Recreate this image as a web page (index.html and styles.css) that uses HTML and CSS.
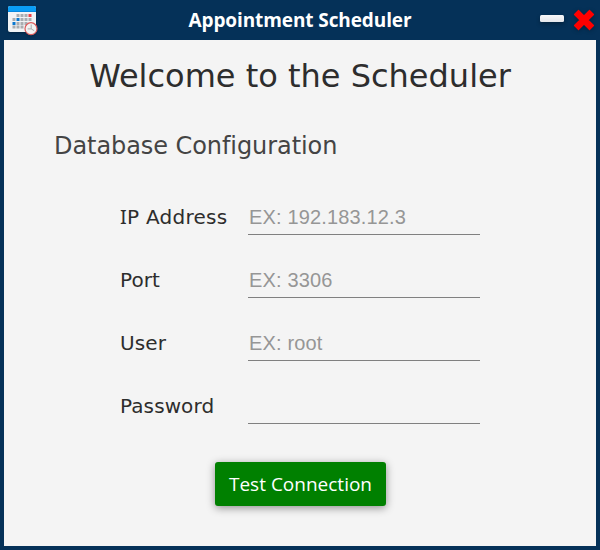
FILE: index.html
```html
<!DOCTYPE html>
<html lang="en">
<head>
<meta charset="utf-8">
<title>Appointment Scheduler</title>
<link rel="stylesheet" href="styles.css">
</head>
<body>
<div class="window">
  <header class="titlebar">
    <svg class="app-icon" width="32" height="32" viewBox="0 0 32 32">
      <rect x="2" y="2" width="28" height="26" rx="2" fill="#f1f3f5"/>
      <path d="M2 8V4a2 2 0 0 1 2-2h24a2 2 0 0 1 2 2v4z" fill="#0a9df5"/>
      <path d="M2 7.500h28" stroke="#0587df"/>
      <g fill="#a9adb1">
        <path d="M10.500 10h3v3h-3zM14.500 10h3v3h-3zM18.500 10h3v3h-3zM6.500 14h3v3h-3zM14.500 14h3v3h-3zM18.500 14h3v3h-3zM22.500 14h3v3h-3zM10.500 18h3v3h-3zM14.500 18h3v3h-3zM18.500 18h3v3h-3zM6.500 21.500h3v3h-3zM10.500 21.500h3v3h-3zM14.500 21.500h3v3h-3z"/>
      </g>
      <path d="M22.500 10h3v3h-3z" fill="#ef4148"/>
      <path d="M10.500 14h3v3h-3zM6.500 18h3v3h-3z" fill="#0878cf"/>
      <circle cx="25" cy="24.700" r="6" fill="#f2f2f2" stroke="#dc5b5b" stroke-width="1.200"/>
      <path d="M25.200 20.500v4.400l3 1.800M25.200 24.900h-3.500" fill="none" stroke="#aaa" stroke-width="1"/>
    </svg>
    <h1 class="window-title">Appointment Scheduler</h1>
    <div class="controls">
      <span class="minimize"></span>
      <svg class="close" width="22" height="22" viewBox="0 0 22 22">
        <path d="M5.500 1.500L11 7l5.500-5.500 4 4L15 11l5.500 5.500-4 4L11 15l-5.500 5.500-4-4L7 11 1.500 5.500z" fill="#f00" stroke="#f00" stroke-width="1.200" stroke-linejoin="round"/>
      </svg>
    </div>
  </header>
  <main class="content">
    <h2 class="welcome">Welcome to the Scheduler</h2>
    <h3 class="section">Database Configuration</h3>
    <form class="form">
      <label class="label label-ip" for="ip"><span class="serif-i">I</span>P Address</label><input class="input" id="ip" placeholder="EX: 192.183.12.3">
      <label class="label" for="port">Port</label><input class="input" id="port" placeholder="EX: 3306">
      <label class="label" for="user">User</label><input class="input" id="user" placeholder="EX: root">
      <label class="label" for="password">Password</label><input class="input" id="password" type="password">
    </form>
    <button class="test" type="button">Test Connection</button>
  </main>
</div>
</body>
</html>
```
FILE: styles.css
```css
* { box-sizing: border-box; }
body { margin: 0; }
.window {
  width: 600px;
  height: 550px;
  padding: 0 4px 4px;
  background: #053158;
}
.titlebar {
  display: grid;
  grid-template-columns: 60px 1fr 60px;
  align-items: center;
  height: 40px;
}
.app-icon { margin-left: 2px; filter: drop-shadow(0 1px 1px rgba(0, 0, 0, .25)); }
.window-title {
  margin: 0;
  text-align: center;
  color: #fff;
  font: bold 19px/40px "Open Sans", sans-serif;
  letter-spacing: -.1px;
  white-space: nowrap;
}
.controls {
  display: flex;
  justify-content: flex-end;
  align-items: center;
  gap: 9px;
  margin-right: 1px;
}
.minimize {
  width: 24px;
  height: 7px;
  margin-bottom: 4px;
  border-radius: 1.5px;
  background: linear-gradient(#f8f8fa, #e4e6ea);
  box-shadow: 0 2px 4px rgba(0, 0, 0, .3);
}
.close { filter: drop-shadow(0 1px 2px rgba(0, 0, 0, .3)); }
.content {
  display: flex;
  flex-direction: column;
  height: 506px;
  background: #f4f4f4;
}
.welcome {
  margin: 16px 0 0;
  text-align: center;
  color: #2d2d2d;
  font: 32px/40px "DejaVu Sans", sans-serif;
  white-space: nowrap;
}
.section {
  margin: 35px 0 0 50px;
  color: #444;
  font: 24px/30px "DejaVu Sans", sans-serif;
  letter-spacing: -.07px;
}
.form {
  display: grid;
  grid-template-columns: 128px 232px;
  row-gap: 27px;
  margin: 38px 0 0 116px;
}
.label {
  color: #2d2d2d;
  font: 20px/36px "DejaVu Sans", sans-serif;
  letter-spacing: .1px;
  white-space: nowrap;
}
.label-ip { letter-spacing: .25px; }
.serif-i { font-family: "Noto Sans", sans-serif; line-height: 1; }
.input {
  width: 232px;
  height: 36px;
  padding: 2px 1px 0;
  border: 0;
  border-bottom: 1px solid #808080;
  outline: 0;
  background: none;
  color: #2d2d2d;
  font: 20px "Liberation Sans", sans-serif;
  letter-spacing: .15px;
}
.input::placeholder { color: #969696; opacity: 1; }
.test {
  align-self: center;
  width: 171px;
  height: 44px;
  margin: 38px 0 0 1px;
  padding: 0;
  border: 0;
  border-radius: 3px;
  background: #008000;
  box-shadow: 0 2px 8px rgba(0, 0, 0, .42);
  color: #fff;
  font: 19px/44px "Open Sans", sans-serif;
  white-space: nowrap;
}
```
